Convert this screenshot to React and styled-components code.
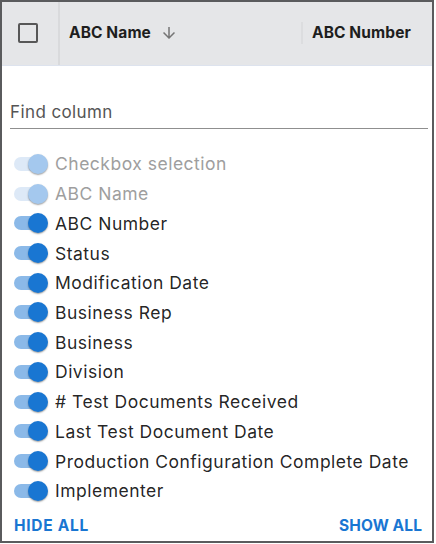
import styled, { createGlobalStyle } from 'styled-components';

const GlobalStyle = createGlobalStyle`
  html, body {
    margin: 0;
    padding: 0;
    background: #ffffff;
  }
  body {
    font-family: Inter, "Noto Sans", sans-serif;
  }
`;

const Frame = styled('div')`
  box-sizing: border-box;
  width: 434px;
  height: 543px;
  border: 2px solid #5a5b5d;
  display: flex;
  flex-direction: column;
  background: #ffffff;
  overflow: hidden;
`;

const HeaderBar = styled('div')`
  height: 63px;
  flex: none;
  background: #e5e6e8;
  border-bottom: 1px solid #dde3ee;
  display: flex;
  align-items: stretch;
`;

const CheckCell = styled('div')`
  width: 56px;
  flex: none;
  display: flex;
  align-items: center;
  justify-content: center;
  border-right: 2px solid #d9dadc;
`;

const CheckBox = styled('div')`
  box-sizing: border-box;
  width: 20px;
  height: 20px;
  border: 2px solid #575757;
  border-radius: 2px;
  margin-right: 4px;
  margin-top: -2px;
`;

const HeadCell = styled('div')`
  display: flex;
  align-items: center;
  width: ${p => p.$width}px;
  flex: none;
  padding-left: ${p => p.$pad}px;
  padding-bottom: 2px;
  box-sizing: border-box;
  font-family: Inter, "Liberation Sans", sans-serif;
  font-weight: 700;
  font-size: 15.5px;
  letter-spacing: 0.1px;
  color: #1e1e1e;
`;

const SortIcon = styled('svg')`
  margin-left: 9px;
  margin-top: 1px;
`;

const ColSep = styled('div')`
  width: 2px;
  height: 22px;
  background: #dcdddf;
  align-self: center;
  flex: none;
  margin-top: -2px;
`;

const Body = styled('div')`
  flex: 1;
  display: flex;
  flex-direction: column;
  padding: 0 4px 0 8px;
`;

const SearchField = styled('div')`
  margin-top: 36px;
  padding: 0 0 6px 0;
  border-bottom: 1px solid #8f8f8f;
  font-size: 17px;
  color: #555555;
  letter-spacing: 0.4px;
  line-height: 20px;
`;

const List = styled('div')`
  margin-top: 20px;
  display: flex;
  flex-direction: column;
`;

const Row = styled('div')`
  height: 29.73px;
  display: flex;
  align-items: center;
  font-size: 17.5px;
  letter-spacing: 0.5px;
  color: ${p => (p.$disabled ? '#9e9e9e' : 'rgba(0,0,0,0.87)')};
`;

const Switch = styled('div')`
  position: relative;
  width: 33px;
  height: 14px;
  margin-left: 4px;
  margin-right: 8px;
  flex: none;
`;

const Track = styled('div')`
  width: 100%;
  height: 100%;
  border-radius: 7px;
  background: ${p => (p.$disabled ? '#dde9f7' : '#8bb9e8')};
`;

const Thumb = styled('div')`
  position: absolute;
  top: -3px;
  right: -1px;
  width: 20px;
  height: 20px;
  border-radius: 50%;
  background: ${p => (p.$disabled ? '#a4c8ee' : '#1976d2')};
  box-shadow: 0 1px 2px rgba(0,0,0,0.25), 0 1px 1px rgba(0,0,0,0.14);
`;

const Footer = styled('div')`
  margin-top: auto;
  display: flex;
  justify-content: space-between;
  padding: 0 6px 6px 4px;
`;

const TextButton = styled('button')`
  border: none;
  background: none;
  padding: 0;
  font-family: Inter, "Noto Sans", sans-serif;
  font-weight: 700;
  font-size: 15.5px;
  letter-spacing: ${p => (p.$tight ? '0.1px' : '0.7px')};
  color: #1976d2;
  text-transform: uppercase;
  cursor: pointer;
`;

const columns = [
  { label: 'Checkbox selection', disabled: true },
  { label: 'ABC Name', disabled: true },
  { label: 'ABC Number' },
  { label: 'Status' },
  { label: 'Modification Date' },
  { label: 'Business Rep' },
  { label: 'Business' },
  { label: 'Division' },
  { label: '# Test Documents Received' },
  { label: 'Last Test Document Date' },
  { label: 'Production Configuration Complete Date' },
  { label: 'Implementer' },
];

export default function App() {
  return (
    <>
      <GlobalStyle />
      <Frame>
        <HeaderBar>
          <CheckCell>
            <CheckBox />
          </CheckCell>
          <HeadCell $width={241} $pad={9}>
            ABC Name
            <SortIcon width="18" height="18" viewBox="0 0 24 24">
              <path d="M20 12l-1.41-1.41L13 16.17V4h-2v12.17l-5.58-5.59L4 12l8 8 8-8z" fill="#757575" />
            </SortIcon>
          </HeadCell>
          <ColSep />
          <HeadCell $width={130} $pad={9}>ABC Number</HeadCell>
        </HeaderBar>
        <Body>
          <SearchField>Find column</SearchField>
          <List>
            {columns.map(c => (
              <Row key={c.label} $disabled={c.disabled}>
                <Switch>
                  <Track $disabled={c.disabled} />
                  <Thumb $disabled={c.disabled} />
                </Switch>
                {c.label}
              </Row>
            ))}
          </List>
          <Footer>
            <TextButton>Hide all</TextButton>
            <TextButton $tight>Show all</TextButton>
          </Footer>
        </Body>
      </Frame>
    </>
  );
}
